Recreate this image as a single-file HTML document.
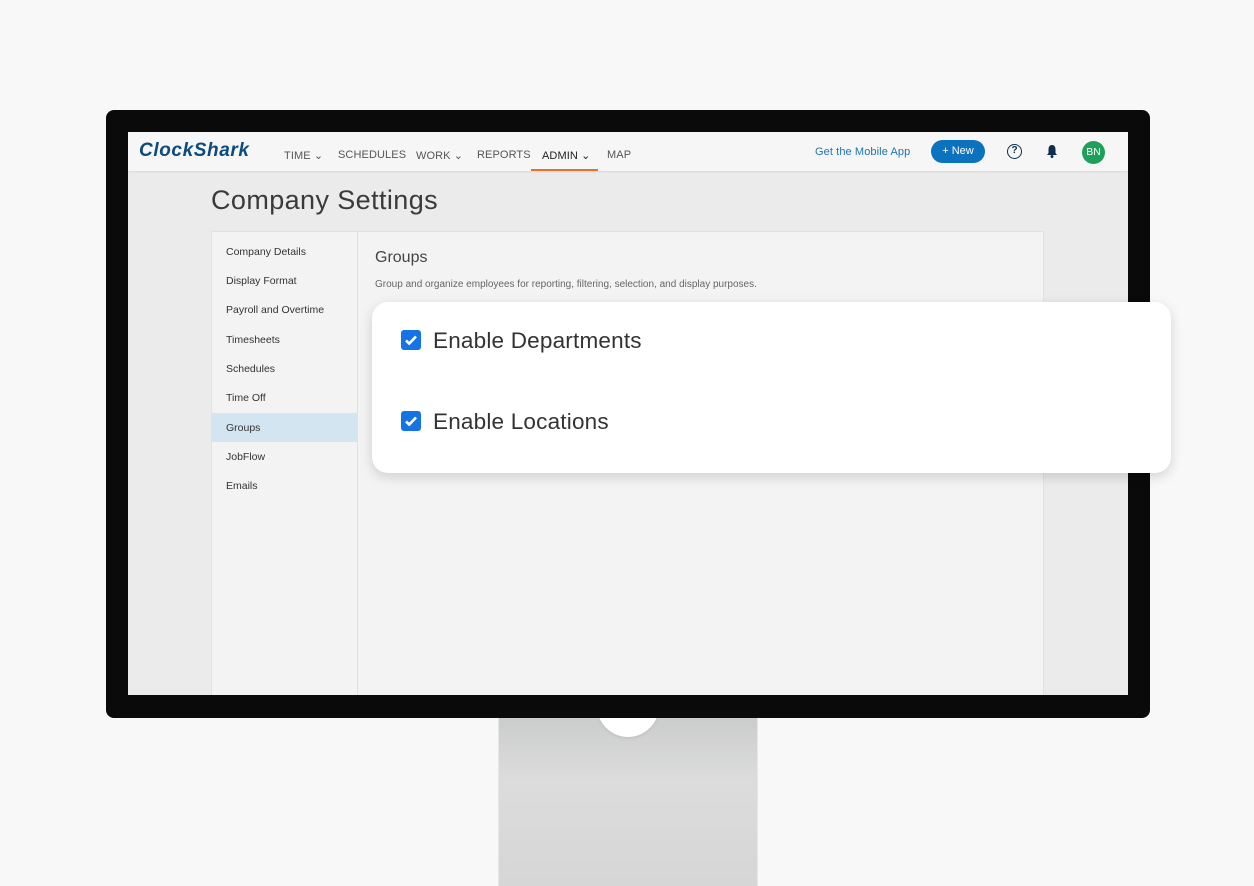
<!DOCTYPE html>
<html><head><meta charset="utf-8"><style>
*{margin:0;padding:0;box-sizing:border-box}
body{width:1254px;height:886px;background:#f8f8f8;position:relative;overflow:hidden;font-family:"Liberation Sans",sans-serif}
.abs{position:absolute}
.stand{left:498px;top:710px;width:260px;height:176px;background:linear-gradient(#c9caca,#dcdcdc 40%,#d6d6d6);border-left:1px solid #e6e6e6;border-right:1px solid #e6e6e6}
.notch{left:597px;top:690px;width:62px;height:47px;border-radius:0 0 31px 31px;background:#fff;box-shadow:0 2px 2px rgba(0,0,0,.06)}
.frame{left:106px;top:110px;width:1044px;height:608px;background:#0a0a0a;border-radius:8px}
.screen{left:128px;top:132px;width:1000px;height:563px;background:#ebebeb;overflow:hidden}
.nav{left:0;top:0;width:1000px;height:39px;background:#f6f6f6;box-shadow:0 1px 2px rgba(0,0,0,.08)}
.nav span{position:absolute;top:17px;font-size:11px;color:#555;letter-spacing:.1px}
.logo{left:11px;top:8px;font-size:19px;font-weight:bold;font-style:italic;color:#0d4a7e;letter-spacing:.6px}
.side div{position:absolute;left:14px;font-size:10.5px;color:#333}
</style></head><body>
<div class="abs stand"></div>
<div class="abs notch"></div>
<div class="abs frame"></div>
<div class="abs screen">
 <div class="abs nav">
  <div class="abs logo">ClockShark</div>
  <span style="left:156px">TIME ⌄</span>
  <span style="left:210px">SCHEDULES</span>
  <span style="left:288px">WORK ⌄</span>
  <span style="left:349px">REPORTS</span>
  <span style="left:414px;color:#222">ADMIN ⌄</span>
  <div class="abs" style="left:403px;top:37px;width:67px;height:2px;background:#e8702a"></div>
  <span style="left:479px">MAP</span>
  <span style="left:687px;top:14px;color:#1f73b7;font-size:11px">Get the Mobile App</span>
  <div class="abs" style="left:803px;top:8px;width:54px;height:23px;border-radius:12px;background:#0b72c0;color:#fff;font-size:11px;text-align:center;line-height:23px">+ New</div>
  <div class="abs" style="left:879px;top:12px;width:15px;height:15px;border:1.7px solid #0d2e4d;border-radius:50%;font-size:10px;font-weight:bold;text-align:center;line-height:12px;color:#0d2e4d">?</div>
  <svg class="abs" style="left:918px;top:12px" width="12" height="15" viewBox="0 0 12 15"><path d="M6 1C3.5 1 2.5 3 2.5 5.5V9L1 11h10L9.5 9V5.5C9.5 3 8.5 1 6 1z" fill="#0d2e4d"/><circle cx="6" cy="12.5" r="1.5" fill="#0d2e4d"/></svg>
  <div class="abs" style="left:954px;top:9px;width:23px;height:23px;border-radius:50%;background:#1ea05a;color:#fff;font-size:10.5px;text-align:center;line-height:23px">BN</div>
 </div>
 <div class="abs" style="left:83px;top:53px;font-size:27px;color:#3a3a3a;letter-spacing:.4px">Company Settings</div>
 <div class="abs" style="left:83px;top:99px;width:833px;height:470px;background:#f3f3f3;border:1px solid #e2e2e2">
  <div class="abs side" style="left:0;top:0;width:146px;height:470px;border-right:1px solid #e0e0e0">
   <div style="top:14px">Company Details</div>
   <div style="top:43px">Display Format</div>
   <div style="top:72px">Payroll and Overtime</div>
   <div style="top:102px">Timesheets</div>
   <div style="top:131px">Schedules</div>
   <div style="top:160px">Time Off</div>
   <div style="top:181px;left:0;width:146px;height:29px;background:#d3e5f1"></div>
   <div style="top:190px">Groups</div>
   <div style="top:219px">JobFlow</div>
   <div style="top:248px">Emails</div>
  </div>
  <div class="abs" style="left:163px;top:17px;font-size:16px;color:#444">Groups</div>
  <div class="abs" style="left:163px;top:47px;font-size:10px;color:#666">Group and organize employees for reporting, filtering, selection, and display purposes.</div>
 </div>
</div>
<div class="abs" style="left:372px;top:302px;width:799px;height:171px;background:#fff;border-radius:16px;box-shadow:0 4px 12px rgba(0,0,0,.15)">
 <div class="abs" style="left:29px;top:28px;width:20px;height:20px;background:#1673e6;border-radius:3px"><svg width="20" height="20"><path d="M5 10.5l3.2 3L15 6.5" stroke="#fff" stroke-width="2.6" fill="none"/></svg></div>
 <div class="abs" style="left:61px;top:26px;font-size:22.5px;color:#333;letter-spacing:.2px">Enable Departments</div>
 <div class="abs" style="left:29px;top:109px;width:20px;height:20px;background:#1673e6;border-radius:3px"><svg width="20" height="20"><path d="M5 10.5l3.2 3L15 6.5" stroke="#fff" stroke-width="2.6" fill="none"/></svg></div>
 <div class="abs" style="left:61px;top:107px;font-size:22.5px;color:#333;letter-spacing:.2px">Enable Locations</div>
</div>
</body></html>
